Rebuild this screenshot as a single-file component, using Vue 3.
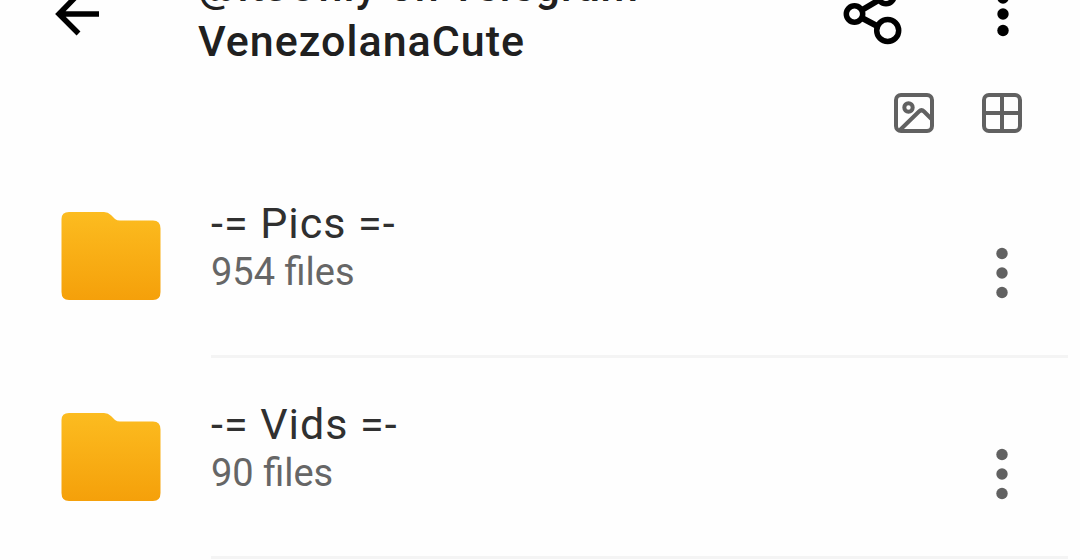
<script setup>
const folders = [
  { name: '-= Pics =-', count: 954 },
  { name: '-= Vids =-', count: 90 },
]
</script>

<template>
  <div class="screen">
    <header class="bar">
      <button class="icon-btn back" aria-label="Back">
        <svg width="48" height="48" viewBox="0 0 48 48" fill="none" stroke="#000" stroke-width="5.500">
          <path d="M47 24H7M26.500 4L7 24L26.500 43.500" />
        </svg>
      </button>
      <h1 class="title"><span>@itsOnly on Telegram</span><span>VenezolanaCute</span></h1>
      <button class="icon-btn share" aria-label="Share">
        <svg width="60" height="74" viewBox="0 0 60 74" fill="none" stroke="#000" stroke-width="5.500">
          <path d="M19 33L36 23M19 41L36 50" stroke-width="6" />
          <circle cx="11.500" cy="37" r="8.200" />
          <circle cx="43" cy="18.500" r="8.200" />
          <circle cx="44.700" cy="53.500" r="11" />
        </svg>
      </button>
      <button class="icon-btn" aria-label="More options">
        <svg width="12" height="50" viewBox="0 0 12 50" fill="#000">
          <circle cx="6" cy="9" r="5.700" /><circle cx="6" cy="25" r="5.700" /><circle cx="6" cy="41.500" r="5.700" />
        </svg>
      </button>
    </header>

    <div class="tools">
      <button class="icon-btn" aria-label="Show thumbnails">
        <svg width="40" height="40" viewBox="0 0 40 40" fill="none" stroke="#616161" stroke-width="4">
          <rect x="2" y="2" width="36" height="36" rx="5" />
          <circle cx="14.500" cy="14.500" r="4.200" />
          <path d="M6 37L25 18.500Q27.500 16 30 18.500L38 26.500" />
        </svg>
      </button>
      <button class="icon-btn" aria-label="Grid view">
        <svg width="40" height="40" viewBox="0 0 40 40" fill="none" stroke="#616161" stroke-width="4">
          <rect x="2" y="2" width="36" height="36" rx="5" />
          <path d="M20 2V38M2 20H38" />
        </svg>
      </button>
    </div>

    <ul class="list">
      <li v-for="(folder, i) in folders" :key="folder.name" class="row">
        <svg class="folder" width="100" height="90" viewBox="0 0 100 90" aria-hidden="true">
          <defs>
            <linearGradient :id="'folder-fill-' + i" x1="0" y1="0" x2="0" y2="1">
              <stop offset="0" stop-color="#fcbc20" />
              <stop offset="1" stop-color="#f5a00a" />
            </linearGradient>
          </defs>
          <path :fill="`url(#folder-fill-${i})`" d="M8 1H43Q47 1 50 4L54 8Q56 9.500 59 9.500H92Q99.500 9.500 99.500 17.500V81Q99.500 89 92 89H8Q0.500 89 0.500 81V8Q0.500 1 8 1Z" />
        </svg>
        <div class="body">
          <div class="text">
            <h2 class="name">{{ folder.name }}</h2>
            <p class="count">{{ folder.count }} files</p>
          </div>
          <button class="icon-btn more" :aria-label="'Options for ' + folder.name">
            <svg width="12" height="52" viewBox="0 0 12 52" fill="#616161">
              <circle cx="6" cy="6.500" r="5.700" /><circle cx="6" cy="26" r="5.700" /><circle cx="6" cy="45.500" r="5.700" />
            </svg>
          </button>
        </div>
      </li>
    </ul>
  </div>
</template>

<style>
body {
  margin: 0;
  background: #fefefe;
  overflow: hidden;
}
</style>

<style scoped>
.screen {
  font-family: Roboto, "Noto Sans", sans-serif;
  color: #303030;
}
.icon-btn {
  display: flex;
  flex: none;
  padding: 0;
  border: 0;
  background: none;
}
.bar {
  display: flex;
  align-items: center;
  margin-top: -41px;
  padding: 0 71px 0 52px;
}
.title {
  flex: 1;
  display: flex;
  flex-direction: column;
  margin: 0 0 0 98px;
  font-size: 43px;
  line-height: 55px;
  font-weight: 500;
  letter-spacing: 1px;
  color: #202020;
}
.share {
  margin-right: 94px;
}
.tools {
  display: flex;
  justify-content: flex-end;
  gap: 48px;
  padding: 24px 58px 0 0;
}
.list {
  margin: 24px 0 0;
  padding: 0;
  list-style: none;
}
.row {
  display: flex;
  padding: 0 12px 0 61px;
}
.folder {
  flex: none;
  margin-top: 54px;
}
.body {
  flex: 1;
  display: flex;
  justify-content: space-between;
  align-items: flex-start;
  height: 198px;
  margin-left: 50px;
  border-bottom: 3px solid #f4f4f4;
}
.text {
  padding-top: 40px;
}
.name {
  margin: 0;
  font-size: 43px;
  line-height: 52px;
  font-weight: 400;
  letter-spacing: 1px;
}
.count {
  margin: 0;
  font-size: 38px;
  line-height: 46px;
  color: #666;
}
.more {
  margin: 90px 60px 0 0;
}
</style>
